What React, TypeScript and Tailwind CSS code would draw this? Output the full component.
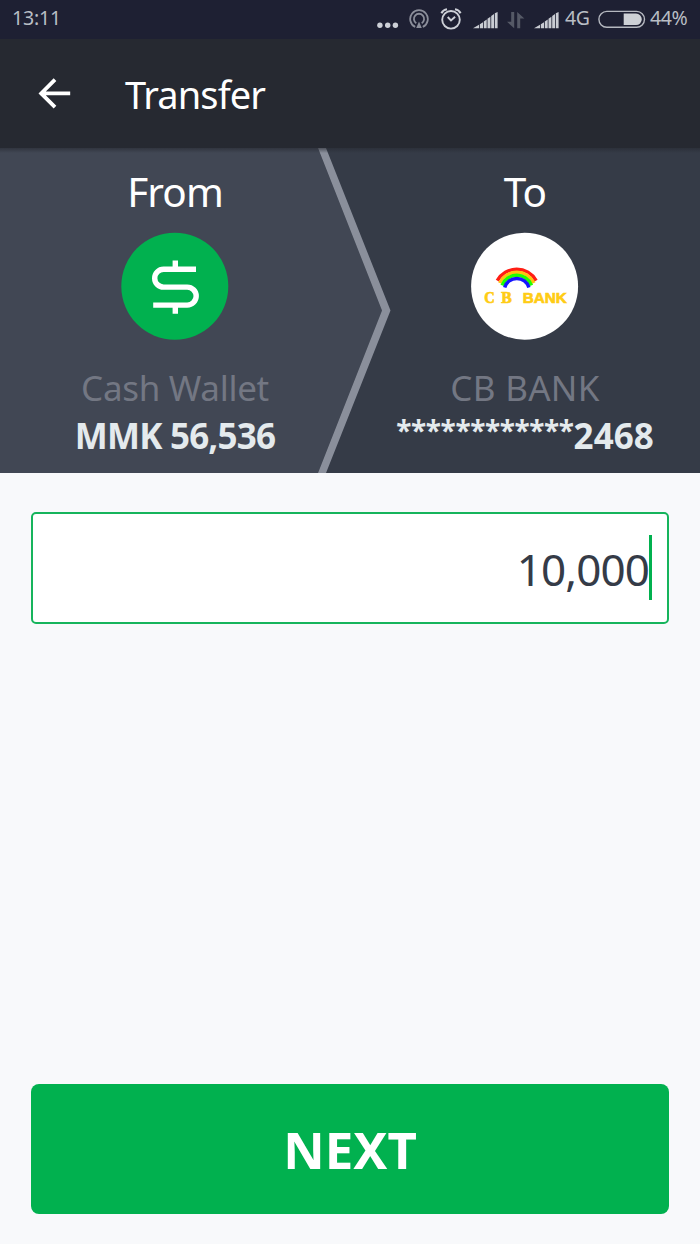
import type { ReactNode } from 'react';

const SignalIcon = () => (
    <svg width="25" height="17" viewBox="0 0 25 17" fill="#c9ccd3">
        <path d="M0 16.2L6 12.8V16.2ZM6.8 12.2L10 10.2V16.2H6.8ZM10.8 9.4L13.7 7.5V16.2H10.8ZM14.5 6.8L17.4 4.7V16.2H14.5ZM18.2 4L21 2V16.2H18.2ZM21.8 1.2L24.6 0V16.2H21.8Z" />
    </svg>
);

const PodcastIcon = () => (
    <svg width="20" height="20" viewBox="0 0 20 20" fill="none" stroke="#8b8e9a" strokeWidth="1.8">
        <path d="M6.2 17.9A8.8 8.8 0 1 1 13.8 17.9" />
        <path d="M7.3 14.2A5.1 5.1 0 1 1 12.7 14.2" />
        <path d="M10 12.5L12.8 19H7.2Z" fill="#8b8e9a" stroke="none" />
    </svg>
);

const AlarmIcon = () => (
    <svg width="22" height="22" viewBox="0 0 22 22" fill="none" stroke="#cdd0d7" strokeWidth="1.9">
        <circle cx="11" cy="11.8" r="8.8" />
        <path d="M7.7 9L11 12.4L15.1 8.8" />
        <path d="M1.4 5.3C2.4 3.2 4.4 1.6 7 1.3M20.6 5.3C19.6 3.2 17.6 1.6 15 1.3" strokeWidth="2" />
    </svg>
);

const DataArrowsIcon = () => (
    <svg width="18" height="17" viewBox="0 0 18 17" fill="#555966">
        <path d="M4.2 0H7.2V16.2L0 9.8H4.2Z" />
        <path d="M10.2 0L17.4 6.6H13.2V16.2H10.2Z" />
    </svg>
);

const BatteryIcon = () => (
    <svg width="48" height="18" viewBox="0 0 48 18">
        <rect x="0.9" y="1.4" width="45.6" height="15.8" rx="7.9" fill="none" stroke="#b5b8c0" strokeWidth="1.4" />
        <path d="M25.7 3.5H38a5.8 5.8 0 0 1 0 11.6H25.7Z" fill="#cdd0d5" />
    </svg>
);

function StatusBar() {
    return (
        <div className="flex h-[39px] items-start bg-[#1e2033] text-[19.5px] leading-[35px] text-[#b9bec5]">
            <span className="ml-[12px] w-[365px] whitespace-nowrap tracking-[-0.2px]">13:11</span>
            <svg className="mt-[22px]" width="22" height="7" viewBox="0 0 22 7" fill="#cdd0d7">
                <circle cx="2.9" cy="3.3" r="2.7" />
                <circle cx="10.7" cy="3.3" r="2.7" />
                <circle cx="18.4" cy="3.3" r="2.7" />
            </svg>
            <div className="mt-[9px] ml-[10px]"><PodcastIcon /></div>
            <div className="mt-[8px] ml-[11px]"><AlarmIcon /></div>
            <div className="mt-[12px] ml-[11px]"><SignalIcon /></div>
            <div className="mt-[12px] ml-[9px]"><DataArrowsIcon /></div>
            <div className="mt-[12px] ml-[9px]"><SignalIcon /></div>
            <span className="ml-[6px] w-[28px] whitespace-nowrap tracking-[-0.5px]">4G</span>
            <div className="mt-[10px] ml-[5px]"><BatteryIcon /></div>
            <span className="ml-[4px] whitespace-nowrap tracking-[-0.4px]">44%</span>
        </div>
    );
}

function DollarLogo() {
    return (
        <svg width="108" height="108" viewBox="0 0 108 108">
            <circle cx="53.8" cy="54.2" r="53.5" fill="#01b14f" />
            <path
                d="M75 37.3H42.6a8.9 8.9 0 0 0 0 17.8H66.2a9 9 0 0 1 0 18H32.2M54.3 28.6V37M54.3 73V81.7"
                fill="none"
                stroke="#fff"
                strokeWidth="5.4"
            />
        </svg>
    );
}

function BankLogo() {
    return (
        <svg width="108" height="108" viewBox="0 0 108 108">
            <circle cx="53.6" cy="54.2" r="53.5" fill="#fff" />
            <g fill="none" strokeWidth="3.5">
                <path d="M26.3 48.6A22.3 22.3 0 0 1 65.1 48.6" stroke="#ff1e14" />
                <path d="M28.7 51A19 19 0 0 1 62.9 51" stroke="#ffc20e" />
                <path d="M31.1 53.3A15.8 15.8 0 0 1 60.5 53.3" stroke="#1eff00" />
                <path d="M33.7 55.5A12.6 12.6 0 0 1 57.9 55.5" stroke="#1414ff" />
            </g>
            <g fill="#ffcc14" stroke="#ffcc14" strokeWidth="0.7" fontWeight="700">
                <text x="13.3" y="71.4" fontSize="16" fontFamily="'Liberation Serif', serif" textLength="10.5" lengthAdjust="spacingAndGlyphs">C</text>
                <text x="30.3" y="71.4" fontSize="16" fontFamily="'Liberation Serif', serif" textLength="10.5" lengthAdjust="spacingAndGlyphs">B</text>
                <text x="51.8" y="71.4" fontSize="15" fontFamily="'Liberation Sans', sans-serif" textLength="44" lengthAdjust="spacingAndGlyphs">
                    BANK
                </text>
            </g>
        </svg>
    );
}

interface AccountProps {
    title: string;
    logo: ReactNode;
    name: string;
    nameClass: string;
    children: ReactNode;
}

function Account({ title, logo, name, nameClass, children }: AccountProps) {
    return (
        <div className="flex w-1/2 flex-col items-center whitespace-nowrap">
            <h2 className="mt-[15px] h-[56px] text-[40.5px] leading-[57px] tracking-[-0.9px] text-white">{title}</h2>
            <div className="mt-[13px] h-[108px]">{logo}</div>
            <p className={`mt-[24px] h-[48px] text-[35px] leading-[48px] text-[#737783] ${nameClass}`}>{name}</p>
            <p className="flex h-[48px] text-[35px] leading-[48px] font-bold text-[#e4eaed]">{children}</p>
        </div>
    );
}

export default function App() {
    return (
        <div className="flex h-[1244px] w-[700px] flex-col overflow-hidden bg-[#f8f9fb] font-['Noto_Sans',sans-serif]">
            <StatusBar />

            <header className="flex h-[109px] items-center bg-[#262931] text-white">
                <svg className="ml-[38px]" width="33" height="32" viewBox="0 0 33 32" fill="none" stroke="#fff" strokeWidth="3.8">
                    <path d="M17 1.6L3.2 15.4L17 29.2M3.2 15.4H32.2" />
                </svg>
                <h1 className="ml-[54px] text-[38px] leading-[52px] tracking-[-0.9px]">Transfer</h1>
            </header>

            <section className="relative h-[325px] bg-[#353b47]">
                <svg className="absolute inset-0" width="700" height="325" viewBox="0 0 700 325">
                    <path d="M0 0H318L382 162.5L318 325H0Z" fill="#414754" />
                    <path d="M318 0H326L390.5 162.5L326 325H318L382 162.5Z" fill="#8a8f9b" />
                </svg>
                <div className="absolute inset-x-0 top-0 h-[5px] bg-gradient-to-b from-[#262931]/60 to-transparent" />
                <div className="relative flex">
                    <Account title="From" logo={<DollarLogo />} name="Cash Wallet" nameClass="tracking-[-0.3px]">
                        <span className="tracking-[-0.8px]">MMK 56,536</span>
                    </Account>
                    <Account title="To" logo={<BankLogo />} name="CB BANK" nameClass="tracking-[0.3px]">
                        <span className="text-[28px] leading-[37px] tracking-[-0.4px]">************</span>
                        <span>2468</span>
                    </Account>
                </div>
            </section>

            <main className="flex flex-1 flex-col justify-between px-[31px] pt-[39px] pb-[30px]">
                <div className="flex h-[112px] items-center justify-end rounded-[5px] border-2 border-[#16b45c] bg-white pr-[15px]">
                    <span className="pt-[2px] text-[44px] leading-[60px] tracking-[-0.9px] text-[#353b47]">10,000</span>
                    <span className="mb-[1px] h-[65px] w-[3px] bg-[#01b14f]" />
                </div>
                <button className="h-[130px] rounded-[8px] bg-[#01b14f] text-[51px] leading-[70px] font-bold text-white">
                    NEXT
                </button>
            </main>
        </div>
    );
}
